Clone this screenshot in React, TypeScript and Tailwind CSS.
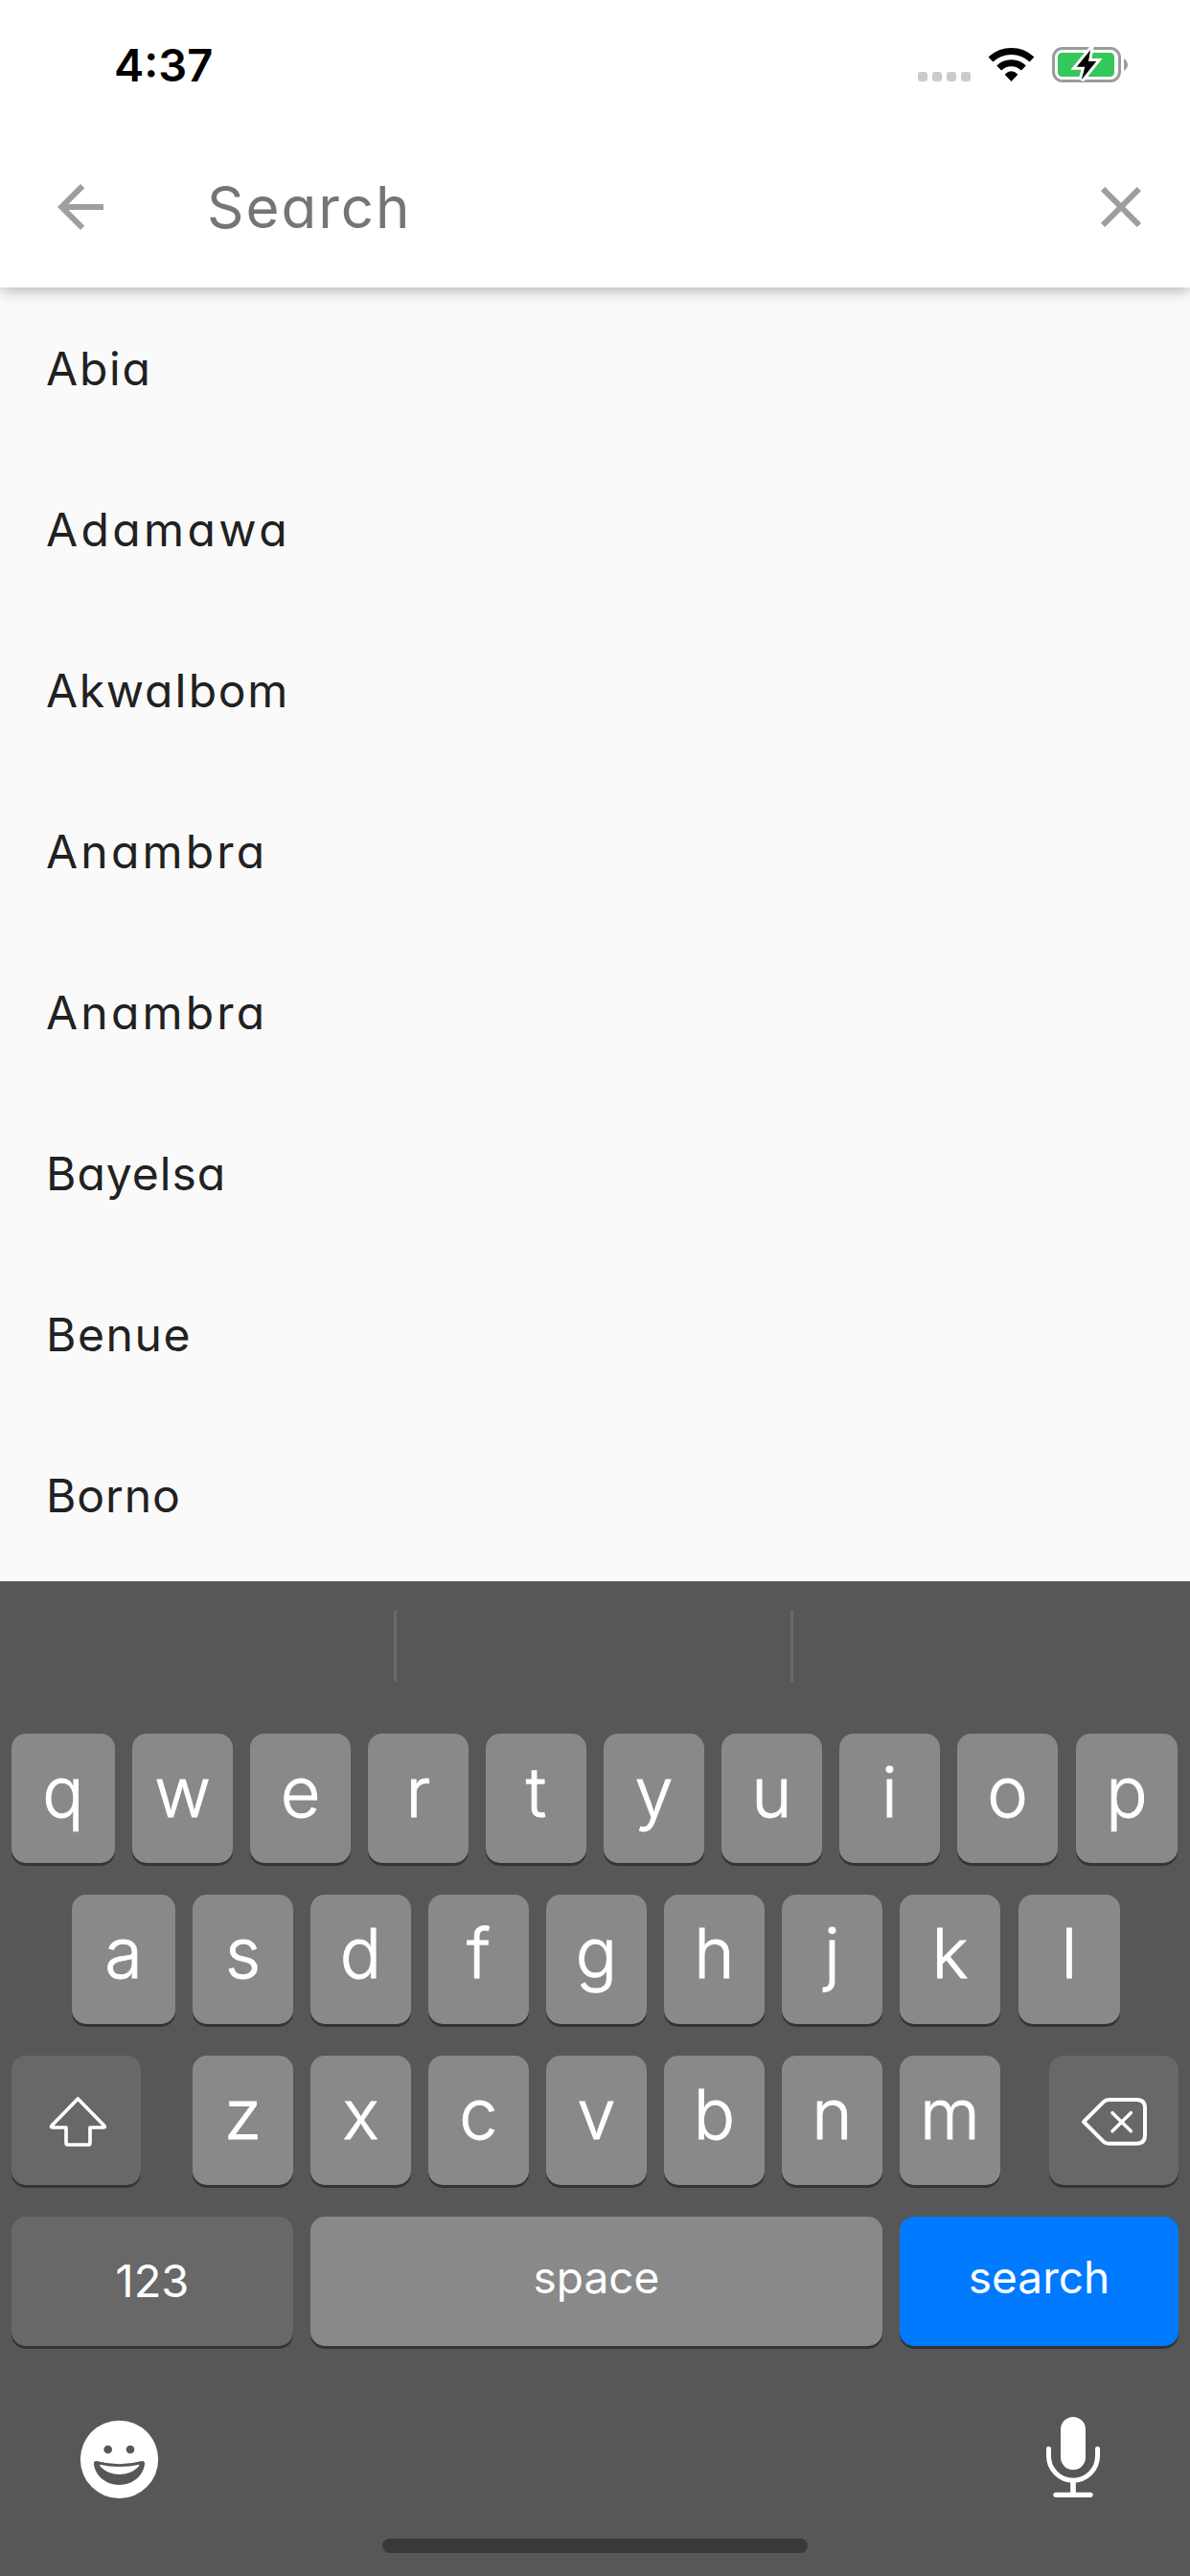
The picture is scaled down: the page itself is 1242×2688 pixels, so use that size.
import type { ReactNode } from "react";
import { MdArrowBack, MdClose } from "react-icons/md";

const STATES = [
  { name: "Abia", tracking: "tracking-[1.8px]" },
  { name: "Adamawa", tracking: "tracking-[3.4px]" },
  { name: "AkwaIbom", tracking: "tracking-[1.7px]" },
  { name: "Anambra", tracking: "tracking-[3.2px]" },
  { name: "Anambra", tracking: "tracking-[3.2px]" },
  { name: "Bayelsa", tracking: "tracking-[1px]" },
  { name: "Benue", tracking: "tracking-[1.6px]" },
  { name: "Borno", tracking: "tracking-[0.9px]" },
];

function WifiIcon() {
  return (
    <svg className="h-[38px] w-[48px]" viewBox="0 0 144 114">
      <g fill="none" stroke="#000">
        <path d="M6 42 A94 94 0 0 1 135 42" strokeWidth="21" />
        <path d="M32 69 A55 55 0 0 1 109 69" strokeWidth="21" />
      </g>
      <path d="M50 89 Q70.500 69 91 89 L70.500 111 Z" fill="#000" />
    </svg>
  );
}

function BatteryIcon() {
  return (
    <svg className="h-[40px] w-[82px]" viewBox="0 0 82 40">
      <rect x="2.5" y="3.5" width="69" height="34" rx="9.5" fill="none" stroke="#9b9b9b" strokeWidth="3" />
      <path d="M76 14 Q80 17 80 20.500 Q80 24 76 27 Z" fill="#9b9b9b" />
      <rect x="7" y="8" width="59" height="25" rx="4.500" fill="#34c759" />
      <path d="M41 5.300 L26.700 22.700 H35.300 L31.700 36.300 L47.300 17 H39 Z" fill="#000" stroke="#fff" strokeWidth="6" paintOrder="stroke" />
    </svg>
  );
}

function StatusBar() {
  return (
    <div className="flex h-[132px] items-start justify-between pl-[119px] pr-[63px]">
      <span className="text-[47px] font-semibold leading-[135px] text-black">4:37</span>
      <div className="flex pt-[46px]">
        <div className="mr-[19px] flex gap-[5px] pt-[29px]">
          {[0, 1, 2, 3].map((i) => (
            <span key={i} className="size-[10px] rounded-[3px] bg-[#cbcbcb]" />
          ))}
        </div>
        <div className="mr-[17px] pt-[2px]">
          <WifiIcon />
        </div>
        <div className="pt-px">
          <BatteryIcon />
        </div>
      </div>
    </div>
  );
}

function SearchBar() {
  return (
    <div className="flex h-[168px] items-center pl-12 pr-9 text-[#9e9e9e]">
      <MdArrowBack className="size-[72px]" />
      <span className="ml-[96px] flex-1 text-[60px] leading-[72px] tracking-[2px] text-[#757575] [font-feature-settings:'cv11']">
        Search
      </span>
      <MdClose className="size-[72px]" />
    </div>
  );
}

type KeyProps = { children: ReactNode; className: string };

function Key({ children, className }: KeyProps) {
  return (
    <div className={`flex h-[135px] shrink-0 justify-center rounded-[15px] shadow-[0_3px_0_#343434] ${className}`}>
      {children}
    </div>
  );
}

function Letter({ char, size = "w-[105px]" }: { char: string; size?: string }) {
  return (
    <Key className={`bg-[#898989] ${size}`}>
      <span className="text-[72px] font-light leading-[122px] [-webkit-text-stroke:0.9px_#fff]">{char}</span>
    </Key>
  );
}

function LetterRow({ letters, indent }: { letters: string; indent: string }) {
  return (
    <div className={`flex gap-[18px] ${indent}`}>
      {letters.split("").map((c, i) => (
        <Letter
          key={c}
          char={c}
          size={i === 0 ? "w-[108px]" : i === letters.length - 1 ? "ml-px w-[106px]" : "w-[105px]"}
        />
      ))}
    </div>
  );
}

function ShiftIcon() {
  return (
    <svg className="h-[140px] w-[135px]" viewBox="0 0 405 420" fill="none" stroke="#fff" strokeWidth="11" strokeLinejoin="round">
      <path d="M208 135 L126 219 Q122 225 128 225 H171 V272 Q171 279 178 279 H239 Q246 279 246 272 V225 H288 Q295 225 290 219 Z" />
    </svg>
  );
}

function DeleteIcon() {
  return (
    <svg className="h-[140px] w-[135px]" viewBox="0 0 405 420" fill="none" stroke="#fff" strokeWidth="12" strokeLinejoin="round" strokeLinecap="round">
      <path d="M108 207 L170 145 Q177 138 187 138 H274 Q300 138 300 164 V249 Q300 275 274 275 H187 Q177 275 170 269 Z" />
      <path d="M198 179 L256 236 M256 179 L198 236" strokeWidth="10.5" />
    </svg>
  );
}

function EmojiIcon() {
  return (
    <svg className="size-[100px]" viewBox="0 0 300 300">
      <circle cx="145.500" cy="151" r="122" fill="#fff" />
      <circle cx="110" cy="120" r="13" fill="#575757" />
      <circle cx="180" cy="120" r="13" fill="#575757" />
      <path d="M74 156 Q145 175 217 156 Q226 156 225 166 C221 203 187 231 145.500 231 C104 231 70 203 66 166 Q65 156 74 156 Z" fill="#575757" />
      <path d="M84 167 Q145 181 209 167 Q207 172 202 177 Q180 198 146 198 Q112 198 90 177 Q84 172 84 167 Z" fill="#fff" />
    </svg>
  );
}

function MicIcon() {
  return (
    <svg className="h-[110px] w-[100px]" viewBox="0 0 300 330" fill="none" stroke="#fff" strokeLinecap="round">
      <rect x="111" y="36" width="78" height="166" rx="39" fill="#fff" stroke="none" />
      <path d="M73.500 136 V158 A76.500 76.500 0 0 0 226.500 158 V136" strokeWidth="15" />
      <path d="M150 238 V278" strokeWidth="17" strokeLinecap="butt" />
      <path d="M96 280 H204" strokeWidth="16" />
    </svg>
  );
}

function Keyboard() {
  return (
    <div className="flex h-[1038px] flex-col bg-[#575757] text-white">
      <div className="flex h-[159px] gap-[411px] pl-[411px] pt-[30px]">
        <div className="h-[75px] w-[3px] bg-[#696969]" />
        <div className="h-[75px] w-[3px] bg-[#696969]" />
      </div>
      <div className="flex flex-col gap-[33px]">
        <LetterRow letters="qwertyuiop" indent="pl-3" />
        <LetterRow letters="asdfghjkl" indent="pl-[75px]" />
        <div className="flex px-3">
          <Key className="w-[135px] bg-[#686868]">
            <ShiftIcon />
          </Key>
          <div className="ml-[54px] mr-[51px] flex gap-[18px]">
            {"zxcvbnm".split("").map((c) => (
              <Letter key={c} char={c} />
            ))}
          </div>
          <Key className="w-[135px] bg-[#686868]">
            <DeleteIcon />
          </Key>
        </div>
        <div className="flex gap-[18px] px-3">
          <Key className="w-[294px] bg-[#686868]">
            <span className="text-[47px] leading-[134px]">123</span>
          </Key>
          <Key className="w-[597px] bg-[#898989]">
            <span className="text-[46px] leading-[126px]">space</span>
          </Key>
          <Key className="w-[291px] bg-[#007aff]">
            <span className="text-[46px] leading-[126px]">search</span>
          </Key>
        </div>
      </div>
      <div className="flex justify-between pl-[76px] pr-[72px] pt-[62px]">
        <div className="pt-[6px]">
          <EmojiIcon />
        </div>
        <MicIcon />
      </div>
      <div className="ml-[399px] mt-[29px] h-[15px] w-[444px] rounded-full bg-[#393939]" />
    </div>
  );
}

export default function App() {
  return (
    <div className="flex h-[2688px] w-[1242px] flex-col overflow-hidden bg-[#fafafa] font-['Inter',sans-serif]">
      <header className="relative z-10 bg-white shadow-[0_4px_12px_-1px_rgba(0,0,0,0.16),0_6px_15px_-1px_rgba(0,0,0,0.12)]">
        <StatusBar />
        <SearchBar />
      </header>
      <ul className="h-[1350px] overflow-hidden pl-12 text-[48px] text-[#212121] [font-feature-settings:'cv11']">
        {STATES.map((s, i) => (
          <li key={i} className={`h-[168px] leading-[169px] ${s.tracking}`}>
            {s.name}
          </li>
        ))}
      </ul>
      <Keyboard />
    </div>
  );
}
